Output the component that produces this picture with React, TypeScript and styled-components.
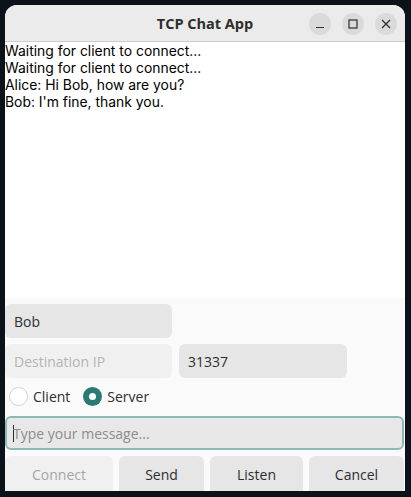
import React from "react";
import styled, { createGlobalStyle } from "styled-components";

const Global = createGlobalStyle`
  html, body { margin: 0; padding: 0; background: #0b1219; }
  body { font-family: "Open Sans", "Noto Sans", sans-serif; }
  * { box-sizing: border-box; }
`;

const Desktop = styled.div`
  width: 411px;
  height: 497px;
  padding: 5px 6px 0 5px;
  background: #0b1219;
  overflow: hidden;
`;

const Window = styled.div`
  width: 400px;
  height: 486px;
  background: #fafafa;
  border-radius: 12px 12px 0 0;
  overflow: hidden;
  display: flex;
  flex-direction: column;
`;

const TitleBar = styled.div`
  height: 37px;
  flex: none;
  background: #ebebeb;
  border-bottom: 1px solid #cdcdcd;
  display: flex;
  align-items: center;
  justify-content: center;
  position: relative;
`;

const Title = styled.div`
  font-weight: 700;
  font-size: 14.5px;
  color: #2e2e2e;
`;

const Controls = styled.div`
  position: absolute;
  right: 8px;
  top: 8px;
  display: flex;
  gap: 11px;
`;

const CtrlButton = styled.div`
  width: 22px;
  height: 22px;
  border-radius: 50%;
  background: #dadada;
  display: flex;
  align-items: center;
  justify-content: center;
  color: #2e2e2e;
`;

const Log = styled.div`
  height: 256px;
  flex: none;
  background: #ffffff;
  padding-top: 1px;
  font-family: "Inter", "Noto Sans", sans-serif;
  font-size: 13.9px;
  line-height: 17px;
  color: #000;
`;

const Line = styled.div`
  white-space: pre;
`;

const Form = styled.div`
  display: flex;
  flex-direction: column;
  padding-top: 6px;
  gap: 6px;
`;

const Row = styled.div`
  display: flex;
  gap: 7px;
`;

const Entry = styled.div<{ $w: number; $dim?: boolean }>`
  width: ${(p) => p.$w}px;
  height: 34px;
  border-radius: 6px;
  background: ${(p) => (p.$dim ? "#f0f0f0" : "#e6e6e6")};
  color: ${(p) => (p.$dim ? "#b4b4b4" : "#2e2e2e")};
  font-size: 14px;
  display: flex;
  align-items: center;
  padding-left: 9px;
`;

const RadioRow = styled.div`
  display: flex;
  align-items: center;
  height: 24px;
  padding-left: 4px;
`;

const RadioItem = styled.div`
  display: flex;
  align-items: center;
  gap: 5px;
  margin-right: 13px;
  font-size: 14px;
  color: #2e2e2e;
`;

const RadioCircle = styled.div<{ $on?: boolean }>`
  width: 19px;
  height: 19px;
  border-radius: 50%;
  border: ${(p) => (p.$on ? "none" : "1px solid #d2d2d2")};
  background: ${(p) => (p.$on ? "#2a7a73" : "#ffffff")};
  display: flex;
  align-items: center;
  justify-content: center;
  &::after {
    content: "";
    display: ${(p) => (p.$on ? "block" : "none")};
    width: 7px;
    height: 7px;
    border-radius: 50%;
    background: #fff;
  }
`;

const MessageEntry = styled.div`
  height: 34px;
  margin-top: 2px;
  width: 399px;
  border: 2px solid #8fb9b4;
  border-radius: 6px;
  background: #e8e8e8;
  display: flex;
  align-items: center;
  padding-left: 6px;
  font-size: 14px;
  color: #8c8c8c;
`;

const Caret = styled.span`
  display: inline-block;
  width: 1px;
  height: 17px;
  background: #2e2e2e;
  margin-right: -1px;
`;

const Buttons = styled.div`
  display: flex;
  gap: 6px;
`;

const Button = styled.div<{ $w: number; $disabled?: boolean }>`
  width: ${(p) => p.$w}px;
  height: 36px;
  border-radius: 6px 6px 0 0;
  background: ${(p) => (p.$disabled ? "#f0f0f0" : "#e6e6e6")};
  color: ${(p) => (p.$disabled ? "#a6a6a6" : "#2e2e2e")};
  font-size: 14px;
  display: flex;
  align-items: center;
  justify-content: center;
`;

export default function App() {
  return (
    <>
      <Global />
      <Desktop>
        <Window>
          <TitleBar>
            <Title>TCP Chat App</Title>
            <Controls>
              <CtrlButton>
                <svg width="10" height="10" viewBox="0 0 10 10">
                  <line x1="1" y1="8.5" x2="9" y2="8.5" stroke="currentColor" strokeWidth="1.2" />
                </svg>
              </CtrlButton>
              <CtrlButton>
                <svg width="10" height="10" viewBox="0 0 10 10">
                  <rect x="1" y="1" width="8" height="8" fill="none" stroke="currentColor" strokeWidth="1.2" />
                </svg>
              </CtrlButton>
              <CtrlButton>
                <svg width="10" height="10" viewBox="0 0 10 10">
                  <path d="M1 1 L9 9 M9 1 L1 9" stroke="currentColor" strokeWidth="1.3" />
                </svg>
              </CtrlButton>
            </Controls>
          </TitleBar>
          <Log>
            <Line>Waiting for client to connect...</Line>
            <Line>Waiting for client to connect...</Line>
            <Line>Alice: Hi Bob, how are you?</Line>
            <Line>Bob: I'm fine, thank you.</Line>
          </Log>
          <Form>
            <Row>
              <Entry $w={167}>Bob</Entry>
            </Row>
            <Row>
              <Entry $w={167} $dim>Destination IP</Entry>
              <Entry $w={168}>31337</Entry>
            </Row>
            <RadioRow>
              <RadioItem>
                <RadioCircle />
                Client
              </RadioItem>
              <RadioItem>
                <RadioCircle $on />
                Server
              </RadioItem>
            </RadioRow>
            <MessageEntry>
              <Caret />
              Type your message...
            </MessageEntry>
            <Buttons>
              <Button $w={108} $disabled>Connect</Button>
              <Button $w={85}>Send</Button>
              <Button $w={93}>Listen</Button>
              <Button $w={95}>Cancel</Button>
            </Buttons>
          </Form>
        </Window>
      </Desktop>
    </>
  );
}
